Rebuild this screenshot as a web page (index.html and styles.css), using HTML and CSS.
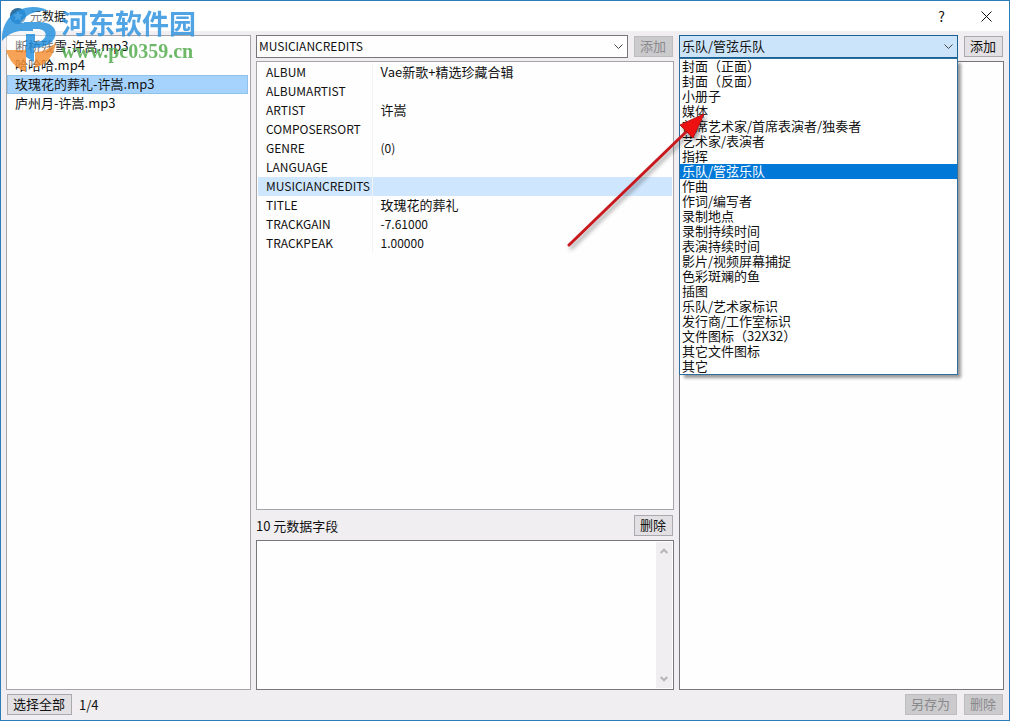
FILE: index.html
```
<!DOCTYPE html>
<html lang="zh-CN">
<head>
<meta charset="utf-8">
<title>元数据</title>
<link rel="stylesheet" href="styles.css">
</head>
<body>
<div class="window">
  <header class="titlebar">
    <svg class="app-icon" viewBox="0 0 16 16" aria-hidden="true"><circle cx="8" cy="8" r="8" fill="#2f6f9f"/><path d="M8 3l1.500 3.300 3.500.4-2.600 2.400.7 3.500L8 10.900l-3.100 1.700.7-3.500L3 6.700l3.500-.4z" fill="#fff"/></svg>
    <h1 class="title">元数据</h1>
    <button class="caption-button" type="button" aria-label="帮助">?</button>
    <button class="caption-button" type="button" aria-label="关闭"><svg width="11" height="11" viewBox="0 0 11 11"><path d="M.5.5l10 10M10.500.5l-10 10" stroke="#111" fill="none"/></svg></button>
  </header>

  <main class="columns">
    <ul class="panel files">
      <li class="file">断桥残雪-许嵩.mp3</li>
      <li class="file">哈哈哈.mp4</li>
      <li class="file selected">玫瑰花的葬礼-许嵩.mp3</li>
      <li class="file">庐州月-许嵩.mp3</li>
    </ul>

    <section class="middle">
      <div class="toolbar">
        <div class="combo">
          <select class="combo-select latin" aria-label="字段"><option>MUSICIANCREDITS</option></select>
          <svg class="chevron" viewBox="0 0 9 6"><path d="M.5.5l4 4 4-4" fill="none" stroke="#444"/></svg>
        </div>
        <button class="button" type="button" disabled>添加</button>
      </div>
      <div class="panel fields">
        <table class="field-table">
          <tr><th scope="row">ALBUM</th><td>Vae新歌+精选珍藏合辑</td></tr>
          <tr><th scope="row">ALBUMARTIST</th><td></td></tr>
          <tr><th scope="row">ARTIST</th><td>许嵩</td></tr>
          <tr><th scope="row">COMPOSERSORT</th><td></td></tr>
          <tr><th scope="row">GENRE</th><td class="latin">(0)</td></tr>
          <tr><th scope="row">LANGUAGE</th><td></td></tr>
          <tr class="current"><th scope="row">MUSICIANCREDITS</th><td></td></tr>
          <tr><th scope="row">TITLE</th><td>玫瑰花的葬礼</td></tr>
          <tr><th scope="row">TRACKGAIN</th><td class="latin">-7.61000</td></tr>
          <tr><th scope="row">TRACKPEAK</th><td class="latin">1.00000</td></tr>
        </table>
      </div>
      <div class="summary">
        <label for="value">10 元数据字段</label>
        <button class="button" type="button">删除</button>
      </div>
      <div class="editor">
        <textarea id="value" class="value"></textarea>
        <div class="scrollbar" aria-hidden="true">
          <svg class="scroll-arrow" viewBox="0 0 8 6"><path d="M.7 5L4 1.700 7.300 5" fill="none" stroke="#b5b5b5" stroke-width="2"/></svg>
          <svg class="scroll-arrow" viewBox="0 0 8 6"><path d="M.7 1L4 4.300 7.300 1" fill="none" stroke="#b5b5b5" stroke-width="2"/></svg>
        </div>
      </div>
    </section>

    <section class="right">
      <div class="toolbar">
        <div class="combo open">
          <select class="combo-select" aria-label="图片类型"><option>乐队/管弦乐队</option></select>
          <svg class="chevron" viewBox="0 0 9 6"><path d="M.5.5l4 4 4-4" fill="none" stroke="#444"/></svg>
          <ul class="menu" role="listbox" aria-label="图片类型">
            <li role="option">封面（正面）</li>
            <li role="option">封面（反面）</li>
            <li role="option">小册子</li>
            <li role="option">媒体</li>
            <li role="option">首席艺术家/首席表演者/独奏者</li>
            <li role="option">艺术家/表演者</li>
            <li role="option">指挥</li>
            <li role="option" aria-selected="true" class="active">乐队/管弦乐队</li>
            <li role="option">作曲</li>
            <li role="option">作词/编写者</li>
            <li role="option">录制地点</li>
            <li role="option">录制持续时间</li>
            <li role="option">表演持续时间</li>
            <li role="option">影片/视频屏幕捕捉</li>
            <li role="option">色彩斑斓的鱼</li>
            <li role="option">插图</li>
            <li role="option">乐队/艺术家标识</li>
            <li role="option">发行商/工作室标识</li>
            <li role="option">文件图标（32X32）</li>
            <li role="option">其它文件图标</li>
            <li role="option">其它</li>
          </ul>
        </div>
        <button class="button" type="button">添加</button>
      </div>
      <div class="panel preview"></div>
    </section>
  </main>

  <footer class="footer">
    <button class="button" type="button">选择全部</button>
    <span class="count">1/4</span>
    <button class="button" type="button" disabled>另存为</button>
    <button class="button" type="button" disabled>删除</button>
  </footer>

  <div class="watermark">
    <svg class="watermark-logo" viewBox="0 0 58 68" aria-hidden="true">
      <circle cx="29" cy="34" r="26" fill="#fff" opacity=".5"/>
      <path d="M1 36C0 16 14 2 32 2c6 0 11 1 15 4-13-1-22 4-28 12h13v8H19C11 27 5 31 1 36z" fill="#2a93df"/>
      <path d="M23 17h15c24 0 22 25-5 26v14l-8-5V29h9v8c12 0 15-12 3-13H20z" fill="#2a93df"/>
      <path d="M5 45h20v22C15 63 8 56 5 45zM34 47c9 0 16-4 21-10-2 14-9 22-21 26z" fill="#f5923a"/>
    </svg>
    <div>
      <p class="watermark-name">河东软件园</p>
      <p class="watermark-url">www.pc0359.cn</p>
    </div>
  </div>

  <svg class="pointer" viewBox="0 0 150 150" aria-hidden="true">
    <path d="M9 140L126 27" stroke="#c8191e" stroke-width="3" stroke-linecap="round"/>
    <path d="M144 9l-24 11 13 13z" fill="#ee1111" stroke="#b5161a"/>
  </svg>
</div>
</body>
</html>
```
FILE: styles.css
```
* { box-sizing: border-box; }
body {
  margin: 0;
  font: 13px/19px "Noto Sans CJK SC", sans-serif;
  color: #111;
}
ul, p, h1 { margin: 0; padding: 0; list-style: none; font-weight: 400; }
button, select, textarea { font: inherit; color: inherit; border-radius: 0; margin: 0; }

.window {
  position: relative;
  display: flex;
  flex-direction: column;
  height: 100vh;
  border: 1px solid #2b7cb8;
  background: #f0eef1;
}
.titlebar {
  display: flex;
  align-items: center;
  height: 30px;
  padding-left: 9px;
  background: #fff;
}
.app-icon { width: 16px; height: 16px; }
.title { flex: 1; margin-left: 4px; font-size: 12px; line-height: 18px; }
.caption-button {
  display: grid;
  place-items: center;
  width: 45px;
  height: 28px;
  padding: 0;
  border: 0;
  background: none;
  font-size: 14px;
}

.columns {
  flex: 1;
  min-height: 0;
  display: grid;
  grid-template-columns: 245fr 418fr 325fr;
  gap: 5px;
  padding: 4px 5px 0;
}
.panel { border: 1px solid #a5a4a8; background: #fefefe; }
.files { padding: 1px 1px 1px 0; }
.file { height: 19px; padding: 0 7px; border: 1px solid transparent; line-height: 16px; }
.file.selected { border-color: #8ec2ea; background: #a6d3fd; margin-right: 1px; }

.middle, .right { display: flex; flex-direction: column; min-width: 0; }
.toolbar { display: flex; align-items: center; gap: 6px; padding-right: 1px; margin-bottom: 3px; }
.combo { position: relative; flex: 1; }
.combo-select {
  appearance: none;
  display: block;
  width: 100%;
  height: 23px;
  padding: 0 2px 2px;
  border: 1px solid #77767b;
  background: #fefefe;
  line-height: 19px;
}
.open .combo-select { border-color: #1b5f93; background: #cce4f9; }
.latin, .field-table th { font-size: 12px; }
.chevron { position: absolute; right: 5px; top: 9px; width: 9px; height: 6px; }
.button {
  height: 21px;
  padding: 0 6px 2px 5px;
  border: 1px solid #aaa9ad;
  background: #e2e0e3;
  line-height: 17px;
  white-space: nowrap;
}
.button:disabled { border-color: #bdbcbf; background: #cbcacc; color: #8a898c; }

.menu {
  position: absolute;
  z-index: 1;
  top: 23px;
  left: 0;
  right: 0;
  border: 1px solid #2d6f9f;
  background: #fff;
  box-shadow: 4px 4px 3px -1px rgba(0, 0, 0, .4);
}
.menu li { height: 15px; padding-left: 2px; line-height: 13px; white-space: nowrap; }
.menu .active { background: #0078d7; color: #fff; }

.fields { flex: 1; padding: 1px; }
.field-table { width: 100%; border-collapse: collapse; }
.field-table th, .field-table td { height: 19px; padding: 0 8px 1px; line-height: 18px; text-align: left; font-weight: 400; }
.field-table th { width: 114px; padding-right: 0; border-right: 1px solid #f3f3f5; }
.current { background: #cfe7fe; }
.summary { display: flex; align-items: center; justify-content: space-between; height: 30px; padding-right: 1px; }
.editor { display: flex; height: 150px; padding: 1px; border: 1px solid #77767b; background: #fefefe; }
.value { flex: 1; border: 0; outline: 0; resize: none; background: none; }
.scrollbar {
  display: flex;
  flex-direction: column;
  align-items: center;
  justify-content: space-between;
  width: 16px;
  padding: 6px 0;
  background: #f0eef1;
}
.scroll-arrow { width: 8px; height: 6px; }
.preview { flex: 1; border-color: #77767b; }

.footer { display: flex; align-items: center; gap: 7px; height: 30px; padding: 0 6px 1px; }
.count { flex: 1; }

.watermark { position: absolute; top: 4px; left: 0; display: flex; gap: 2px; opacity: .85; }
.watermark-logo { width: 58px; height: 68px; }
.watermark-name { font-size: 27px; line-height: 36px; font-weight: 700; color: #3295e0; }
.watermark-url { font: 700 20px/20px "Liberation Serif", serif; color: #55ad50; }
.pointer { position: absolute; z-index: 2; left: 559px; top: 104px; width: 150px; height: 150px; filter: drop-shadow(2px 3px 2px rgba(0, 0, 0, .4)); }
```
